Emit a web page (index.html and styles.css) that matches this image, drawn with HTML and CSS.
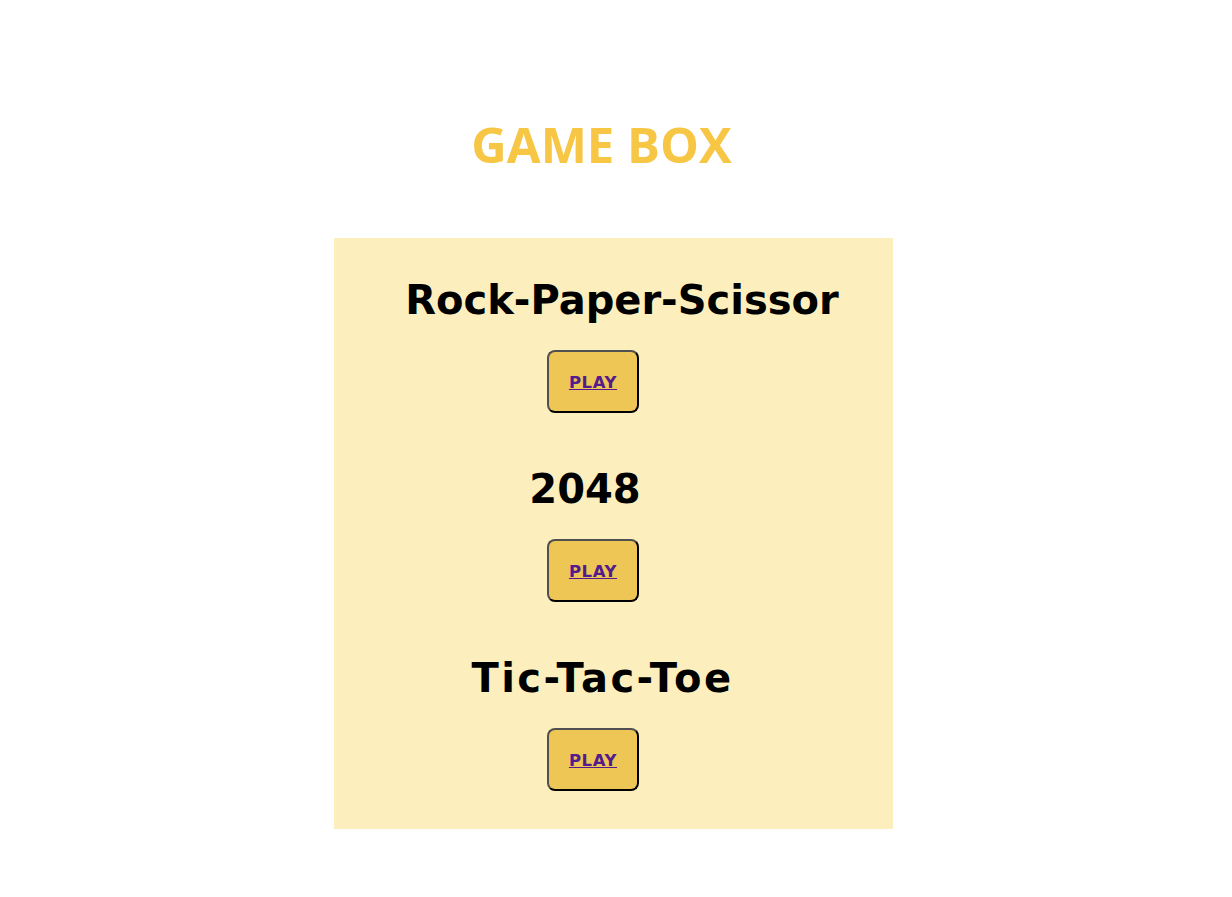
FILE: index.html
```html
<!DOCTYPE html>
<html lang="en">
<head>
<meta charset="utf-8">
<title>Game Box</title>
<link rel="stylesheet" href="styles.css">
</head>
<body>
<h1 class="title">GAME BOX</h1>
<main class="games">
  <section class="game">
    <h2 class="game-name name-rps">Rock-Paper-Scissor</h2>
    <button class="play-btn"><a href="#rps" class="play-link">PLAY</a></button>
  </section>
  <section class="game">
    <h2 class="game-name name-2048">2048</h2>
    <button class="play-btn"><a href="#2048" class="play-link">PLAY</a></button>
  </section>
  <section class="game">
    <h2 class="game-name name-ttt">Tic-Tac-Toe</h2>
    <button class="play-btn"><a href="#ttt" class="play-link">PLAY</a></button>
  </section>
</main>
</body>
</html>
```
FILE: styles.css
```css
body {
  margin: 0;
  padding-right: 5px;
  background: #ffffff;
  font-family: "DejaVu Sans", sans-serif;
}
.title {
  margin: 110px 0 0;
  padding-right: 24px;
  text-align: center;
  font-family: "Open Sans", sans-serif;
  font-weight: 700;
  font-size: 49px;
  line-height: 68px;
  color: #f7c644;
}
.games {
  width: 559px;
  margin: 60px auto 0;
  background: #fcefbd;
  padding: 32px 0 0;
  box-sizing: border-box;
}
.game {
  display: flex;
  flex-direction: column;
  align-items: center;
}
.game-name {
  align-self: stretch;
  margin: 0;
  text-align: center;
  font-size: 40px;
  line-height: 60px;
  font-weight: 700;
  color: #000;
}
.name-rps { padding-left: 17px; }
.name-2048 { padding-right: 57px; }
.name-ttt { padding-right: 22px; letter-spacing: 2.4px; }
.play-btn {
  width: 92px;
  height: 63px;
  margin: 20px 41px 46px 0;
  background: #eec655;
  border: 2px solid;
  border-color: #505050 #000 #000 #505050;
  border-radius: 8px;
  padding: 2px 0 0;
  font-family: "DejaVu Sans", sans-serif;
}
.game:last-child .play-btn {
  margin-bottom: 38px;
}
.play-link {
  color: #551a8b;
  font-weight: 700;
  font-size: 16.5px;
  letter-spacing: 0.6px;
}
```
